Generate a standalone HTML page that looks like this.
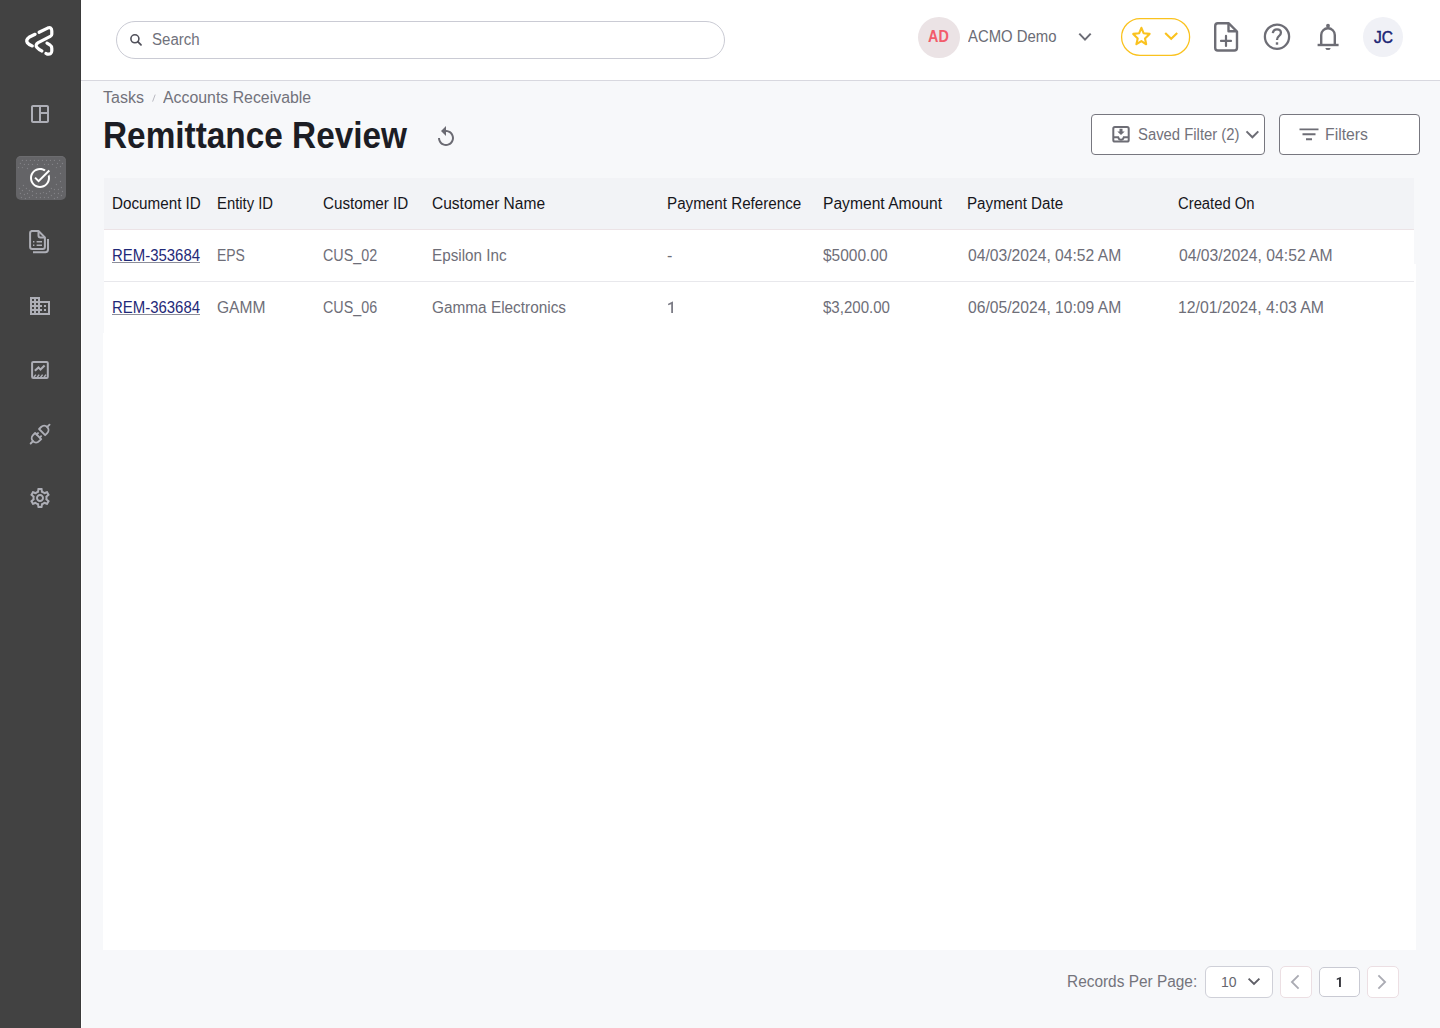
<!DOCTYPE html>
<html><head><meta charset="utf-8">
<style>
*{box-sizing:border-box;margin:0;padding:0}
html,body{width:1440px;height:1028px;overflow:hidden;font-family:"Liberation Sans",sans-serif;background:#f7f8fa}
svg{position:absolute;overflow:visible}
#side{position:absolute;left:0;top:0;width:81px;height:1028px;background:#424242;border-right:1px solid #3b3b3b}
#sidew{position:absolute;left:81px;top:0;width:1px;height:1028px;background:#fff}
#hdr{position:absolute;left:81px;top:0;width:1359px;height:81px;background:#fff;border-bottom:1px solid #d8d8df}
#search{position:absolute;left:116px;top:21px;width:609px;height:38px;border:1px solid #cacbd4;border-radius:19px;background:#fff}
.t{position:absolute;white-space:nowrap;line-height:1;transform-origin:0 0}
#active{position:absolute;left:16px;top:156px;width:50px;height:44px;border-radius:5px;background-color:#646467;box-shadow:inset 0 1px 0 #6c6c6f}
.btn{position:absolute;border:1px solid #77777f;border-radius:4px;background:#fff}
.th{color:#16161b;font-size:16px}
.td{color:#6e6e78;font-size:16px}
.link{color:#1f2a78}
</style></head><body>
<div id="side"></div><div id="sidew"></div>
<!-- logo -->
<svg style="left:0;top:0" width="81" height="81" viewBox="0 0 81 81">
 <g fill="none" stroke="#fff" stroke-width="3.2" stroke-linecap="round" stroke-linejoin="round">
  <path d="M39.1 32.3 L47.6 28.1 Q51.8 26.6 51.8 31 L51.8 34.2 Q51.8 35.6 50.3 36.4 L38.2 42.6 Q34.8 44.8 37 47.6 Q38.6 49.6 41.9 51"/>
  <path d="M35.1 34.3 L29 37.3 Q25.6 39.6 27.3 42.8 Q28.6 44.6 32.3 45.9"/>
  <path d="M47 43.1 L49.8 44.8 Q51.8 46.2 51.8 48.4 L51.8 51 Q51.6 54.8 47.2 54.1 L45.9 53.4"/>
 </g>
</svg>
<!-- dashboard -->
<svg style="left:28px;top:102px" width="24" height="24" viewBox="0 0 24 24"><path fill="#adaeb6" d="M19,3H5C3.9,3,3,3.9,3,5v14c0,1.1,0.9,2,2,2h14c1.1,0,2-0.9,2-2V5C21,3.9,20.1,3,19,3z M5,19V5h6v14H5z M19,19h-6v-7h6V19z M19,10h-6V5h6V10z"/></svg>
<div id="active"></div>
<svg style="left:0;top:0" width="81" height="210" viewBox="0 0 81 210"><g fill="#838387"><circle cx="22.4" cy="160.4" r="0.65"/><circle cx="26.4" cy="160.4" r="0.65"/><circle cx="30.4" cy="160.4" r="0.65"/><circle cx="34.4" cy="160.4" r="0.65"/><circle cx="38.4" cy="160.4" r="0.65"/><circle cx="42.4" cy="160.4" r="0.65"/><circle cx="46.5" cy="160.4" r="0.65"/><circle cx="50.4" cy="160.4" r="0.65"/><circle cx="54.4" cy="160.4" r="0.65"/><circle cx="59.6" cy="160.4" r="0.65"/><circle cx="20.4" cy="163.5" r="0.65"/><circle cx="62.5" cy="163.5" r="0.65"/><circle cx="57.5" cy="163.5" r="0.65"/><circle cx="24.4" cy="164.4" r="0.65"/><circle cx="28.5" cy="164.4" r="0.65"/><circle cx="32.5" cy="164.4" r="0.65"/><circle cx="37.5" cy="164.4" r="0.65"/><circle cx="44.5" cy="164.4" r="0.65"/><circle cx="48.4" cy="164.4" r="0.65"/><circle cx="52.5" cy="164.4" r="0.65"/><circle cx="18.4" cy="167.6" r="0.65"/><circle cx="22.4" cy="167.6" r="0.65"/><circle cx="56.4" cy="167.6" r="0.65"/><circle cx="27.5" cy="168.5" r="0.65"/><circle cx="60.5" cy="166.5" r="0.65"/><circle cx="60.5" cy="173.5" r="0.65"/><circle cx="55.4" cy="177.5" r="0.65"/><circle cx="60.5" cy="181.5" r="0.65"/><circle cx="56.4" cy="184.5" r="0.65"/><circle cx="23.4" cy="185.5" r="0.65"/><circle cx="61.4" cy="187.5" r="0.65"/><circle cx="19.5" cy="188.5" r="0.65"/><circle cx="26.4" cy="188.5" r="0.65"/><circle cx="51.4" cy="188.5" r="0.65"/><circle cx="54.4" cy="189.5" r="0.65"/><circle cx="58.4" cy="189.5" r="0.65"/><circle cx="22.4" cy="190.5" r="0.65"/><circle cx="29.4" cy="190.5" r="0.65"/><circle cx="32.5" cy="191.5" r="0.65"/><circle cx="49.5" cy="191.5" r="0.65"/><circle cx="62.5" cy="191.5" r="0.65"/><circle cx="43.4" cy="192.6" r="0.65"/><circle cx="20.4" cy="193.5" r="0.65"/><circle cx="27.5" cy="193.5" r="0.65"/><circle cx="36.4" cy="193.5" r="0.65"/><circle cx="40.4" cy="193.5" r="0.65"/><circle cx="46.5" cy="193.5" r="0.65"/><circle cx="54.4" cy="193.5" r="0.65"/><circle cx="58.4" cy="193.5" r="0.65"/><circle cx="24.4" cy="194.5" r="0.65"/><circle cx="32.5" cy="195.5" r="0.65"/><circle cx="51.4" cy="195.5" r="0.65"/><circle cx="61.4" cy="195.5" r="0.65"/><circle cx="21.4" cy="197.5" r="0.65"/><circle cx="29.4" cy="197.5" r="0.65"/><circle cx="36.4" cy="197.5" r="0.65"/><circle cx="40.4" cy="197.5" r="0.65"/><circle cx="44.4" cy="197.5" r="0.65"/><circle cx="48.4" cy="197.5" r="0.65"/><circle cx="57.5" cy="197.5" r="0.65"/><circle cx="25.4" cy="198.5" r="0.65"/><circle cx="54.4" cy="198.5" r="0.65"/></g></svg>
<svg style="left:28px;top:166px" width="24" height="24" viewBox="0 0 24 24"><path fill="#fff" d="M22,5.18L10.59,16.6l-4.24-4.24l1.41-1.41l2.83,2.83l10-10L22,5.18z M19.79,10.22C19.92,10.79,20,11.39,20,12 c0,4.42-3.58,8-8,8s-8-3.58-8-8c0-4.42,3.58-8,8-8c1.58,0,3.04,0.46,4.28,1.25l1.44-1.44C16.1,2.67,14.13,2,12,2C6.48,2,2,6.48,2,12 c0,5.52,4.48,10,10,10s10-4.48,10-10c0-1.19-0.22-2.33-0.6-3.39L19.79,10.22z"/></svg>
<!-- documents -->
<svg style="left:0;top:0" width="81" height="600" viewBox="0 0 81 600">
 <g fill="none" stroke="#adaeb6" stroke-width="2" stroke-linejoin="round">
  <path d="M31.5 231 H38.5 L44.9 237.4 V246.8 Q44.9 249 42.7 249 H32.3 Q30.1 249 30.1 246.8 V233.2 Q30.1 231 32.3 231 Z"/>
  <path d="M38.5 231 V235.5 Q38.5 237.4 40.4 237.4 H44.9"/>
  <path d="M48 239 V249.5 Q48 252.2 45.3 252.2 H33"/>
  <path d="M36.6 241.8 H42 M36.6 245.2 H42 M33 241.8 H34.4 M33 245.2 H34.4" stroke-width="1.6"/>
 </g>
</svg>
<!-- building (domain) -->
<svg style="left:28px;top:294px" width="24" height="24" viewBox="0 0 24 24"><path fill="#adaeb6" d="M12 7V3H2v18h20V7H12zM6 19H4v-2h2v2zm0-4H4v-2h2v2zm0-4H4V9h2v2zm0-4H4V5h2v2zm4 12H8v-2h2v2zm0-4H8v-2h2v2zm0-4H8V9h2v2zm0-4H8V5h2v2zm10 12h-8v-2h2v-2h-2v-2h2v-2h-2V9h8v10zm-2-8h-2v2h2v-2zm0 4h-2v2h2v-2z"/></svg>
<!-- chart -->
<svg style="left:0;top:0" width="81" height="600" viewBox="0 0 81 600">
 <g fill="none" stroke="#adaeb6" stroke-width="2">
  <rect x="32.1" y="361.9" width="15.7" height="16.1" rx="1.2"/>
  <path d="M34.9 370.8 L38.5 367.4 L40.5 369.6 L44.6 365.5" stroke-width="2.1"/>
  <path d="M33.8 377.2 L35.8 374.6 M37.2 377.2 L39.2 374.6 M40.6 377.2 L42.6 374.6 M44 377.2 L46 374.6" stroke-width="1.5"/>
 </g>
</svg>
<!-- plug -->
<svg style="left:0;top:0" width="81" height="600" viewBox="0 0 81 600">
 <g transform="translate(40,434.2) rotate(-45)" fill="none" stroke="#adaeb6" stroke-width="1.9" stroke-linecap="round" stroke-linejoin="round">
  <path d="M-13.2 0 H-10"/>
  <path d="M-2.6 -4.3 H-5.6 A4.3 4.3 0 0 0 -5.6 4.3 H-2.6 Z"/>
  <path d="M-2.6 -2.2 H-0.6 M-2.6 2.2 H-0.6"/>
  <path d="M3 -4.3 H5.9 A4.3 4.3 0 0 1 5.9 4.3 H3 Z"/>
  <path d="M10.3 0 H13.5"/>
 </g>
</svg>
<!-- gear -->
<svg style="left:28px;top:486px" width="24" height="24" viewBox="0 0 24 24"><path fill="#adaeb6" d="M19.43 12.98c.04-.32.07-.64.07-.98 0-.34-.03-.66-.07-.98l2.11-1.650c.19-.15.24-.42.12-.64l-2-3.460c-.09-.16-.26-.25-.44-.25-.06 0-.12.01-.17.03l-2.490 1c-.52-.4-1.08-.73-1.69-.98l-.38-2.650C14.46 2.180 14.25 2 14 2h-4c-.25 0-.46.18-.49.42l-.38 2.650c-.61.25-1.170.59-1.690.98l-2.490-1c-.06-.02-.12-.03-.18-.03-.17 0-.34.09-.43.25l-2 3.460c-.13.22-.07.49.12.64l2.110 1.650c-.04.32-.07.65-.07.98 0 .33.03.66.07.98l-2.110 1.650c-.19.15-.24.42-.12.64l2 3.460c.09.16.26.25.44.25.06 0 .12-.01.17-.03l2.490-1c.52.4 1.080.73 1.690.98l.38 2.650c.03.24.24.42.49.42h4c.25 0 .46-.18.49-.42l.38-2.650c.61-.25 1.170-.59 1.690-.98l2.490 1c.06.02.12.03.18.03.17 0 .34-.09.43-.25l2-3.460c.12-.22.07-.49-.12-.64l-2.110-1.650zm-1.980-1.710c.04.31.05.52.05.73 0 .21-.02.43-.05.73l-.14 1.130.89.7 1.080.84-.7 1.210-1.270-.51-1.040-.42-.9.68c-.43.32-.84.56-1.250.73l-1.060.43-.16 1.130-.2 1.350h-1.400l-.19-1.350-.16-1.130-1.060-.43c-.43-.18-.83-.41-1.230-.71l-.91-.7-1.060.43-1.270.51-.7-1.210 1.080-.84.89-.7-.14-1.130c-.03-.31-.05-.54-.05-.74s.02-.43.05-.73l.14-1.130-.89-.7-1.080-.84.7-1.210 1.270.51 1.040.42.9-.68c.43-.32.84-.56 1.250-.73l1.060-.43.16-1.130.2-1.350h1.390l.19 1.350.16 1.130 1.060.43c.43.18.83.41 1.230.71l.91.7 1.060-.43 1.270-.51.7 1.210-1.070.85-.89.7.14 1.130zM12 8c-2.210 0-4 1.790-4 4s1.790 4 4 4 4-1.790 4-4-1.790-4-4-4zm0 6c-1.100 0-2-.9-2-2s.9-2 2-2 2 .9 2 2-.9 2-2 2z"/></svg>

<div id="hdr"></div>
<div id="search"></div>
<svg style="left:0;top:0" width="300" height="81" viewBox="0 0 300 81">
 <circle cx="134.9" cy="38.8" r="4" fill="none" stroke="#50505a" stroke-width="1.6"/>
 <path d="M137.8 41.7 L141 44.9" stroke="#50505a" stroke-width="1.8" stroke-linecap="round"/>
</svg>

<!-- AD avatar -->
<div style="position:absolute;left:918px;top:16.5px;width:41.5px;height:41px;border-radius:50%;background:#ebe3e5"></div>
<svg style="left:0;top:0" width="1440" height="81" viewBox="0 0 1440 81">
 <path d="M1079.3 33.6 L1085 39.6 L1090.7 33.6" fill="none" stroke="#6b6c75" stroke-width="2"/>
 <!-- star pill -->
 <rect x="1121.6" y="18.6" width="68" height="36.8" rx="18.4" fill="#fff" stroke="#fac21e" stroke-width="1.3"/>
 <path d="M1141.4 27.8 L1143.6 33.2 L1149.6 33.9 L1145 38.5 L1146.2 44.3 L1141.4 41.1 L1136.4 44.2 L1137.7 38.5 L1133.2 33.9 L1139.2 33.2 Z" fill="none" stroke="#fac21e" stroke-width="2.1" stroke-linejoin="round"/>
 <path d="M1165.2 33 L1171.2 38.8 L1177.2 33" fill="none" stroke="#fac21e" stroke-width="2.1"/>
 <!-- file add -->
 <g fill="none" stroke="#6d6d75" stroke-width="2.4" stroke-linejoin="round">
  <path d="M1217.8 23.3 H1228.8 L1237 31.5 V47.8 Q1237 50.5 1234.3 50.5 H1217.8 Q1215.2 50.5 1215.2 47.8 V26 Q1215.2 23.3 1217.8 23.3 Z"/>
  <path d="M1228.5 23.5 V31.3 H1236.6"/>
  <path d="M1221 40.9 H1231 M1226 35.9 V45.9" stroke-width="2.2" stroke-linecap="round"/>
 </g>
 <!-- help -->
 <circle cx="1277" cy="36.7" r="12.1" fill="none" stroke="#6d6d75" stroke-width="2.3"/>
 <path d="M1272.8 33.2 Q1273.3 29.3 1277 29.3 Q1280.9 29.3 1280.9 32.8 Q1280.9 34.7 1278.9 36.1 Q1277 37.6 1277 40" fill="none" stroke="#6d6d75" stroke-width="2.3"/>
 <rect x="1275.8" y="42.3" width="2.4" height="2.4" fill="#6d6d75"/>
 <!-- bell -->
 <g fill="none" stroke="#6d6d75" stroke-width="2.4">
  <path d="M1321.2 44.6 V35 A6.8 6.7 0 0 1 1334.8 35 V44.6"/>
  <path d="M1317.6 45 H1338.6"/>
 </g>
 <rect x="1326.1" y="23.8" width="3.8" height="4.2" rx="1.9" fill="#6d6d75"/>
 <path d="M1325.3 47.9 H1330.7 Q1330.3 50.1 1328 50.1 Q1325.7 50.1 1325.3 47.9 Z" fill="#6d6d75"/>
</svg>
<!-- JC avatar -->
<div style="position:absolute;left:1363px;top:17px;width:40px;height:40px;border-radius:50%;background:#f0f1f6"></div>

<!-- breadcrumb + title -->
<svg style="left:434px;top:125px" width="24" height="24" viewBox="0 0 24 24"><path fill="#6b6b73" d="M12 5V1L7 6l5 5V7c3.31 0 6 2.69 6 6s-2.69 6-6 6-6-2.69-6-6H4c0 4.42 3.58 8 8 8s8-3.58 8-8-3.58-8-8-8z"/></svg>

<!-- buttons -->
<div class="btn" style="left:1091px;top:114px;width:174px;height:41px"></div>
<div class="btn" style="left:1279px;top:114px;width:141px;height:41px"></div>
<svg style="left:0;top:0" width="1440" height="200" viewBox="0 0 1440 200">
 <g fill="none" stroke="#6d6d75" stroke-width="2">
  <rect x="1113.3" y="126.9" width="15.4" height="14.7" rx="1.6"/>
  <path d="M1113.3 137.2 H1118.2 Q1119 139.8 1121 139.8 Q1123 139.8 1123.8 137.2 H1128.7"/>
  <path d="M1119.5 128.7 H1122.5 V131.4 H1124.7 L1121 135 L1117.3 131.4 H1119.5 Z" fill="#6d6d75" stroke="none"/>
  <path d="M1246.5 131.4 L1252.4 137.3 L1258.3 131.4"/>
  <path d="M1299.5 129.4 H1318.5 M1302.5 134.3 H1315.5 M1306 139.2 H1312" stroke-width="1.9"/>
 </g>
</svg>

<!-- table -->
<div style="position:absolute;left:104px;top:264px;width:1312px;height:686px;background:#fff"></div>
<div style="position:absolute;left:104px;top:178px;width:1310px;height:156px;background:#fff"></div>
<div style="position:absolute;left:103px;top:333px;width:1px;height:617px;background:#fff"></div>
<div style="position:absolute;left:104px;top:178px;width:1310px;height:52px;background:#f2f3f6;border-bottom:1px solid #ece3e6"></div>
<div style="position:absolute;left:104px;top:281px;width:1310px;height:1px;background:#e8e8ec"></div>


<div style="position:absolute;left:112px;top:262px;width:88px;height:1px;background:#8c8d99"></div>

<div style="position:absolute;left:112px;top:314px;width:88px;height:1px;background:#8c8d99"></div>

<!-- pagination -->
<div style="position:absolute;left:1205px;top:966px;width:68px;height:32px;border:1px solid #cfd0d8;border-radius:6px;background:#fff"></div>
<div style="position:absolute;left:1280px;top:966px;width:32px;height:32px;border:1px solid #ecdfe3;border-radius:5px;background:#fff"></div>
<div style="position:absolute;left:1319px;top:967px;width:41px;height:30px;border:1px solid #c9cad3;border-radius:5px;background:#fff"></div>
<div style="position:absolute;left:1367px;top:966px;width:32px;height:32px;border:1px solid #ecdfe3;border-radius:5px;background:#fff"></div>
<svg style="left:0;top:900px" width="1440" height="128" viewBox="0 900 1440 128">
 <g fill="none" stroke-width="1.8">
  <path d="M1248.6 978.6 L1254 984 L1259.4 978.6" stroke="#5e5e66" stroke-width="1.9"/>
  <path d="M1298.6 975.3 L1291.9 982 L1298.6 988.7" stroke="#aaabb3"/>
  <path d="M1378.4 975.3 L1385.1 982 L1378.4 988.7" stroke="#aaabb3"/>
 </g>
</svg>
<svg style="left:0;top:0" width="200" height="120" viewBox="0 0 200 120"><path d="M152.6 101.6 L155.2 94.6" stroke="#b9b9c1" stroke-width="1"/></svg>
<svg style="left:0;top:0" width="1440" height="1028" viewBox="0 0 1440 1028">
 <path d="M671.2 312.9 V304.2 L668.1 305.2 V303.7 L672.6 301.4 H673 V312.9 Z" fill="#7c7c86"/>
 <path d="M1339 986.9 V979.3 L1336.8 980.1 V978.6 L1340.5 977 H1340.9 V986.9 Z" fill="#34343a"/>
</svg>
<div class="t" style="left:151.76px;top:32px;font-size:16px;font-weight:normal;color:#70717b;transform:scaleX(0.9398);">Search</div>
<div class="t" style="left:928.3px;top:27.7px;font-size:16.5px;font-weight:bold;color:#f25c6b;transform:scaleX(0.8708);">AD</div>
<div class="t" style="left:968.3px;top:28.6px;font-size:16px;font-weight:normal;color:#6b6c75;transform:scaleX(0.9305);">ACMO Demo</div>
<div class="t" style="left:1374.0px;top:30.1px;font-size:16px;font-weight:normal;color:#1a2474;transform:scaleX(0.9684);-webkit-text-stroke:0.45px #1a2474;">JC</div>
<div class="t" style="left:103.1px;top:89.7px;font-size:16px;font-weight:normal;color:#72727b;">Tasks</div>
<div class="t" style="left:163.2px;top:89.7px;font-size:16px;font-weight:normal;color:#72727b;transform:scaleX(0.9913);">Accounts Receivable</div>
<div class="t" style="left:103.35px;top:117.9px;font-size:36px;font-weight:bold;color:#1c1d24;transform:scaleX(0.9266);">Remittance Review</div>
<div class="t" style="left:1137.62px;top:126.6px;font-size:16px;font-weight:normal;color:#72727b;transform:scaleX(0.9282);">Saved Filter (2)</div>
<div class="t" style="left:1325.01px;top:126.6px;font-size:16px;font-weight:normal;color:#72727b;transform:scaleX(0.9857);">Filters</div>
<div class="t" style="left:111.95px;top:195.75px;font-size:16px;font-weight:normal;color:#16161b;transform:scaleX(0.9511);">Document ID</div>
<div class="t" style="left:216.67px;top:195.75px;font-size:16px;font-weight:normal;color:#16161b;transform:scaleX(0.9271);">Entity ID</div>
<div class="t" style="left:322.85px;top:195.75px;font-size:16px;font-weight:normal;color:#16161b;transform:scaleX(0.95);">Customer ID</div>
<div class="t" style="left:432.43px;top:195.75px;font-size:16px;font-weight:normal;color:#16161b;transform:scaleX(0.9704);">Customer Name</div>
<div class="t" style="left:667.35px;top:195.75px;font-size:16px;font-weight:normal;color:#16161b;transform:scaleX(0.9496);">Payment Reference</div>
<div class="t" style="left:822.52px;top:195.75px;font-size:16px;font-weight:normal;color:#16161b;transform:scaleX(0.9769);">Payment Amount</div>
<div class="t" style="left:966.95px;top:195.75px;font-size:16px;font-weight:normal;color:#16161b;transform:scaleX(0.948);">Payment Date</div>
<div class="t" style="left:1177.82px;top:195.75px;font-size:16px;font-weight:normal;color:#16161b;transform:scaleX(0.9259);">Created On</div>
<div class="t" style="left:112.27px;top:248.1px;font-size:16px;font-weight:normal;color:#1f2a78;transform:scaleX(0.9333);">REM-353684</div>
<div class="t" style="left:216.78px;top:248.1px;font-size:16px;font-weight:normal;color:#6e6e78;transform:scaleX(0.8726);">EPS</div>
<div class="t" style="left:322.81px;top:248.1px;font-size:16px;font-weight:normal;color:#6e6e78;transform:scaleX(0.8949);">CUS_02</div>
<div class="t" style="left:431.55px;top:248.1px;font-size:16px;font-weight:normal;color:#6e6e78;transform:scaleX(0.9519);">Epsilon Inc</div>
<div class="t" style="left:667.0px;top:248.1px;font-size:16px;font-weight:normal;color:#6e6e78;">-</div>
<div class="t" style="left:823.4px;top:248.1px;font-size:16px;font-weight:normal;color:#6e6e78;transform:scaleX(0.9667);">$5000.00</div>
<div class="t" style="left:967.7px;top:248.1px;font-size:16px;font-weight:normal;color:#6e6e78;transform:scaleX(0.9788);">04/03/2024, 04:52 AM</div>
<div class="t" style="left:1178.7px;top:248.1px;font-size:16px;font-weight:normal;color:#6e6e78;transform:scaleX(0.9814);">04/03/2024, 04:52 AM</div>
<div class="t" style="left:112.27px;top:300.1px;font-size:16px;font-weight:normal;color:#1f2a78;transform:scaleX(0.9333);">REM-363684</div>
<div class="t" style="left:216.68px;top:300.1px;font-size:16px;font-weight:normal;color:#6e6e78;transform:scaleX(0.974);">GAMM</div>
<div class="t" style="left:322.81px;top:300.1px;font-size:16px;font-weight:normal;color:#6e6e78;transform:scaleX(0.8949);">CUS_06</div>
<div class="t" style="left:431.54px;top:300.1px;font-size:16px;font-weight:normal;color:#6e6e78;transform:scaleX(0.9601);">Gamma Electronics</div>
<div class="t" style="left:823.4px;top:300.1px;font-size:16px;font-weight:normal;color:#6e6e78;transform:scaleX(0.9408);">$3,200.00</div>
<div class="t" style="left:967.7px;top:300.1px;font-size:16px;font-weight:normal;color:#6e6e78;transform:scaleX(0.9788);">06/05/2024, 10:09 AM</div>
<div class="t" style="left:1177.71px;top:300.1px;font-size:16px;font-weight:normal;color:#6e6e78;transform:scaleX(0.9884);">12/01/2024, 4:03 AM</div>
<div class="t" style="left:1066.94px;top:974.2px;font-size:16px;font-weight:normal;color:#74747c;transform:scaleX(0.9632);">Records Per Page:</div>
<div class="t" style="left:1220.93px;top:975.2px;font-size:14px;font-weight:normal;color:#66666e;">10</div>
</body></html>
